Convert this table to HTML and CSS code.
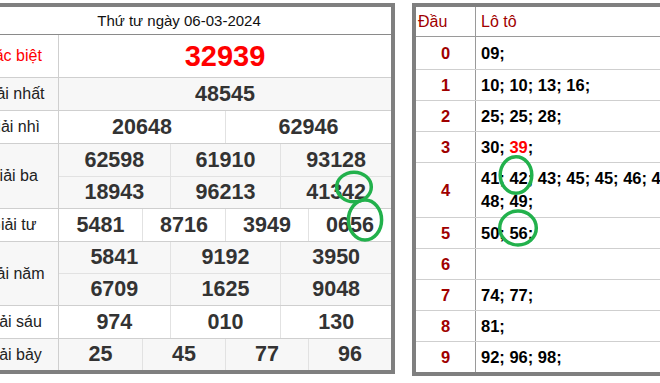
FILE: index.html
```html
<!DOCTYPE html>
<html lang="vi">
<head>
    <meta charset="UTF-8">
    <meta name="viewport" content="width=device-width, initial-scale=1.0">
    <title>Kết quả xổ số 06-03-2024</title>
    <link rel="stylesheet" href="styles.css">
</head>
<body>

    <div class="page">
        <!-- Bảng kết quả -->
        <div class="kq">
            <div class="kq-head">Thứ tư ngày 06-03-2024</div>

            <div class="prize db">
                <div class="name">Đặc biệt</div>
                <div class="nums">
                    <div class="line c1"><span>32939</span></div>
                </div>
            </div>

            <div class="prize">
                <div class="name">Giải nhất</div>
                <div class="nums">
                    <div class="line c1"><span>48545</span></div>
                </div>
            </div>

            <div class="prize">
                <div class="name">Giải nhì</div>
                <div class="nums">
                    <div class="line c2"><span>20648</span><span>62946</span></div>
                </div>
            </div>

            <div class="prize">
                <div class="name">Giải ba</div>
                <div class="nums">
                    <div class="line c3"><span>62598</span><span>61910</span><span>93128</span></div>
                    <div class="line c3"><span>18943</span><span>96213</span><span>41342</span></div>
                </div>
            </div>

            <div class="prize">
                <div class="name">Giải tư</div>
                <div class="nums">
                    <div class="line c4"><span>5481</span><span>8716</span><span>3949</span><span>0656</span></div>
                </div>
            </div>

            <div class="prize">
                <div class="name">Giải năm</div>
                <div class="nums">
                    <div class="line c3"><span>5841</span><span>9192</span><span>3950</span></div>
                    <div class="line c3"><span>6709</span><span>1625</span><span>9048</span></div>
                </div>
            </div>

            <div class="prize">
                <div class="name">Giải sáu</div>
                <div class="nums">
                    <div class="line c3"><span>974</span><span>010</span><span>130</span></div>
                </div>
            </div>

            <div class="prize">
                <div class="name">Giải bảy</div>
                <div class="nums">
                    <div class="line c4"><span>25</span><span>45</span><span>77</span><span>96</span></div>
                </div>
            </div>
        </div>

        <!-- Bảng lô tô -->
        <div class="loto">
            <div class="lr lhead">
                <div class="d">Đầu</div>
                <div class="v">Lô tô</div>
            </div>
            <div class="lr"><div class="d">0</div><div class="v"><span>09;</span></div></div>
            <div class="lr"><div class="d">1</div><div class="v"><span>10; 10; 13; 16;</span></div></div>
            <div class="lr"><div class="d">2</div><div class="v"><span>25; 25; 28;</span></div></div>
            <div class="lr"><div class="d">3</div><div class="v"><span>30; <b class="hot">39</b>;</span></div></div>
            <div class="lr tall"><div class="d">4</div><div class="v"><span>41; 42; 43; 45; 45; 46; 47; 48; 49;</span></div></div>
            <div class="lr"><div class="d">5</div><div class="v"><span>50; 56;</span></div></div>
            <div class="lr"><div class="d">6</div><div class="v"><span></span></div></div>
            <div class="lr"><div class="d">7</div><div class="v"><span>74; 77;</span></div></div>
            <div class="lr"><div class="d">8</div><div class="v"><span>81;</span></div></div>
            <div class="lr"><div class="d">9</div><div class="v"><span>92; 96; 98;</span></div></div>
        </div>

        <!-- Vòng khoanh tay -->
        <svg class="marks" width="660" height="383" viewBox="0 0 660 383">
            <ellipse cx="354" cy="187" rx="17.3" ry="14.8"/>
            <ellipse cx="365" cy="220" rx="16.6" ry="20"/>
            <ellipse cx="516" cy="175" rx="15.8" ry="18.3"/>
            <ellipse cx="518" cy="228" rx="18.3" ry="17"/>
        </svg>
    </div>

</body>
</html>
```

FILE: styles.css
```css
/* Global */
html, body {
    margin: 0;
    padding: 0;
    overflow: hidden;
    background: #fff;
}

body {
    font-family: "Liberation Sans", Arial, sans-serif;
    color: #222;
}

.page {
    position: relative;
    display: flex;
    align-items: flex-start;
    padding-top: 3px;
    width: 660px;
    height: 380px;
}

/* Bảng kết quả */
.kq {
    flex-shrink: 0;
    width: 424px;
    margin-left: -37px;
    border: 4px solid #7f7f7f;
    background: #fff;
}

.kq-head {
    height: 27px;
    line-height: 27px;
    text-align: center;
    font-size: 15px;
    color: #111;
    border-bottom: 1px solid #8a8a8a;
}

.prize {
    display: flex;
    border-bottom: 1px solid #cfcfcf;
}

.prize:last-child {
    border-bottom: none;
}

.prize:nth-child(odd) {
    background: #f7f7f7;
}

.prize .name {
    width: 91px;
    flex-shrink: 0;
    display: flex;
    align-items: center;
    justify-content: center;
    font-size: 16px;
    color: #222;
    border-right: 1px solid #cfcfcf;
}

.prize.db .name {
    color: #f00;
}

.nums {
    flex: 1;
    display: flex;
    flex-direction: column;
}

.line {
    display: grid;
    height: 32px;
}

.line + .line {
    border-top: 1px solid #e2e2e2;
    height: 31px;
}

.c1 { grid-template-columns: 1fr; }
.c2 { grid-template-columns: repeat(2, 1fr); }
.c3 { grid-template-columns: repeat(3, 1fr); }
.c4 { grid-template-columns: repeat(4, 1fr); }

.line span {
    display: flex;
    align-items: center;
    justify-content: center;
    font-size: 21.5px;
    font-weight: bold;
    color: #333;
}

.line span + span {
    border-left: 1px solid #e2e2e2;
}

.prize:nth-child(7) .line:first-child,
.prize:last-child .line {
    height: 31px;
}

.db .line {
    height: 42px;
}

.db .line span {
    font-size: 29px;
    color: #f00;
}

/* Bảng lô tô */
.loto {
    flex-shrink: 0;
    width: 270px;
    margin-left: 17px;
    border: 4px solid #7f7f7f;
    background: #fff;
}

.lr {
    display: flex;
    height: 30px;
    border-bottom: 1px solid #cfcfcf;
}

.lr:last-child {
    border-bottom: none;
}

.lr.lhead {
    height: 29px;
    border-bottom-color: #9a9a9a;
}

.lr.lhead + .lr {
    height: 32px;
}

.lr.tall {
    height: 54px;
}

.lr .d {
    width: 59px;
    flex-shrink: 0;
    display: flex;
    align-items: center;
    justify-content: center;
    font-size: 16.5px;
    font-weight: bold;
    color: #a00000;
}

.lr .v {
    flex: 1;
    display: flex;
    align-items: center;
    padding: 0 5px;
    border-left: 1px solid #9a9a9a;
    font-size: 16.5px;
    font-weight: bold;
    line-height: 23px;
    color: #000;
}

.lhead .d,
.lhead .v {
    font-size: 16px;
    font-weight: normal;
    color: #a00000;
}

.lhead .d {
    justify-content: flex-start;
    padding-left: 2px;
    width: 57px;
}

.hot {
    color: #f00;
}

/* Vòng khoanh */
.marks {
    position: absolute;
    top: 0;
    left: 0;
    pointer-events: none;
}

.marks ellipse {
    fill: none;
    stroke: #22b14c;
    stroke-width: 3.5;
}
```
